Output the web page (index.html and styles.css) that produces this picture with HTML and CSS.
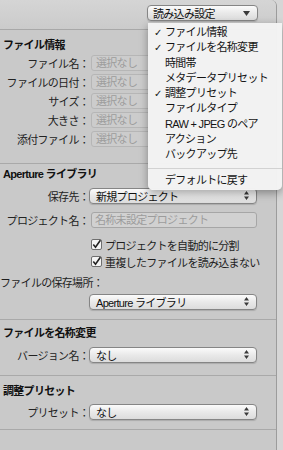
FILE: index.html
```html
<!DOCTYPE html>
<html lang="ja">
<head>
    <meta charset="UTF-8">
    <meta name="viewport" content="width=device-width, initial-scale=1.0">
    <title>読み込み設定</title>
    <link rel="stylesheet" href="styles.css">
</head>
<body>
    <div class="window">
        <div class="topbar">
            <div class="popup popup-top">
                <span>読み込み設定</span>
                <svg class="arrow-down" width="7" height="5" viewBox="0 0 7 5"><path d="M0 0H7L3.5 5Z" fill="#3a3a3a"/></svg>
            </div>
        </div>

        <div class="section section-file">
            <div class="heading">ファイル情報</div>
            <div class="row row-first"><div class="label">ファイル名：</div><div class="field">選択なし</div></div>
            <div class="row"><div class="label">ファイルの日付：</div><div class="field">選択なし</div></div>
            <div class="row"><div class="label">サイズ：</div><div class="field">選択なし</div></div>
            <div class="row"><div class="label">大きさ：</div><div class="field">選択なし</div></div>
            <div class="row"><div class="label">添付ファイル：</div><div class="field">選択なし</div></div>
        </div>

        <div class="section section-library">
            <div class="heading">Aperture ライブラリ</div>
            <div class="row row-first">
                <div class="label">保存先：</div>
                <div class="popup select"><span>新規プロジェクト</span><svg class="updown" width="5" height="9" viewBox="0 0 5 9"><path d="M0 3.5H5L2.5 0Z M0 5.5H5L2.5 9Z" fill="#3a3a3a"/></svg></div>
            </div>
            <div class="row row-project">
                <div class="label">プロジェクト名：</div>
                <div class="field field-light">名称未設定プロジェクト</div>
            </div>
            <div class="checks">
                <div class="check-row"><svg class="checkbox" width="11" height="11" viewBox="0 0 11 11"><rect x="0.5" y="0.5" width="10" height="10" rx="1.5" fill="#f4f4f4" stroke="#6f6f6f"/><path d="M2.3 5.6L4.5 8.2L9.4 1.2" fill="none" stroke="#222" stroke-width="1.6"/></svg><span>プロジェクトを自動的に分割</span></div>
                <div class="check-row"><svg class="checkbox" width="11" height="11" viewBox="0 0 11 11"><rect x="0.5" y="0.5" width="10" height="10" rx="1.5" fill="#f4f4f4" stroke="#6f6f6f"/><path d="M2.3 5.6L4.5 8.2L9.4 1.2" fill="none" stroke="#222" stroke-width="1.6"/></svg><span>重複したファイルを読み込まない</span></div>
            </div>
            <div class="line-label">ファイルの保存場所：</div>
            <div class="row row-location">
                <div class="label"></div>
                <div class="popup select"><span>Aperture ライブラリ</span><svg class="updown" width="5" height="9" viewBox="0 0 5 9"><path d="M0 3.5H5L2.5 0Z M0 5.5H5L2.5 9Z" fill="#3a3a3a"/></svg></div>
            </div>
        </div>

        <div class="section section-rename">
            <div class="heading">ファイルを名称変更</div>
            <div class="row row-first">
                <div class="label">バージョン名：</div>
                <div class="popup select"><span>なし</span><svg class="updown" width="5" height="9" viewBox="0 0 5 9"><path d="M0 3.5H5L2.5 0Z M0 5.5H5L2.5 9Z" fill="#3a3a3a"/></svg></div>
            </div>
        </div>

        <div class="section section-adjust">
            <div class="heading">調整プリセット</div>
            <div class="row row-first">
                <div class="label">プリセット：</div>
                <div class="popup select"><span>なし</span><svg class="updown" width="5" height="9" viewBox="0 0 5 9"><path d="M0 3.5H5L2.5 0Z M0 5.5H5L2.5 9Z" fill="#3a3a3a"/></svg></div>
            </div>
        </div>
    </div>

    <div class="menu">
        <div class="menu-item checked">ファイル情報</div>
        <div class="menu-item checked">ファイルを名称変更</div>
        <div class="menu-item">時間帯</div>
        <div class="menu-item">メタデータプリセット</div>
        <div class="menu-item checked">調整プリセット</div>
        <div class="menu-item">ファイルタイプ</div>
        <div class="menu-item">RAW + JPEG のペア</div>
        <div class="menu-item">アクション</div>
        <div class="menu-item">バックアップ先</div>
        <div class="menu-separator"></div>
        <div class="menu-item">デフォルトに戻す</div>
    </div>
</body>
</html>
```

FILE: styles.css
```css
body {
    margin: 0;
    background-color: #d6d6d6;
    font-family: "Liberation Sans", "Noto Sans CJK JP", sans-serif;
    font-size: 11px;
    letter-spacing: -0.7px;
    color: #1e1e1e;
}
.window {
    width: 276px;
    height: 450px;
    background-color: #c9c9c9;
    border-right: 1px solid #9c9c9c;
    border-top-right-radius: 6px;
    overflow: hidden;
}
.topbar {
    height: 30px;
    box-sizing: border-box;
    padding: 5px 18px 0 0;
    display: flex;
    justify-content: flex-end;
    align-items: flex-start;
    background: linear-gradient(#d5d5d5, #cbcbcb);
    border-bottom: 1px solid #a8a8a8;
}
.popup {
    height: 16px;
    box-sizing: border-box;
    display: flex;
    align-items: center;
    justify-content: space-between;
    padding: 0 7px 0 5px;
    border: 1px solid #858585;
    border-radius: 4px;
    background: linear-gradient(#fbfbfb, #e9e9e9 50%, #dcdcdc);
    box-shadow: 0 1px 1px rgba(0, 0, 0, 0.15);
    color: #111;
    white-space: nowrap;
}
.popup-top {
    width: 111px;
}
.select {
    width: 168px;
    padding-left: 6px;
}
.section {
    border-bottom: 1px solid #a9a9a9;
}
.heading {
    line-height: 14px;
    padding-left: 3px;
    font-weight: bold;
    color: #111;
    white-space: nowrap;
}
.row {
    display: flex;
    align-items: center;
    height: 19px;
}
.label {
    width: 89px;
    flex: none;
    display: flex;
    justify-content: flex-end;
    white-space: nowrap;
    color: #222;
}
.field {
    margin-left: 2px;
    width: 166px;
    height: 16px;
    box-sizing: border-box;
    padding-left: 4px;
    line-height: 14px;
    border: 1px solid #b6b6b6;
    border-radius: 3px;
    background-color: #cccccc;
    color: #9c9c9c;
    white-space: nowrap;
}
.field-light {
    border-color: #a6a6a6;
    background-color: #d1d1d1;
    padding-left: 3px;
}
.checks {
    margin-top: 7px;
    padding-left: 91px;
}
.check-row {
    height: 17px;
    display: flex;
    align-items: center;
    gap: 3px;
    white-space: nowrap;
}
.checkbox {
    flex: none;
}
.line-label {
    margin-top: 6px;
    line-height: 14px;
    white-space: nowrap;
}

/* section spacing */
.section-file {
    padding: 8px 0 15px;
}
.section-file .row-first {
    margin-top: 1px;
}
.section-library {
    padding: 3px 0 8px;
}
.section-library .row-first {
    margin-top: 5px;
}
.row-project {
    margin-top: 5px;
}
.row-location {
    margin-top: 2px;
}
.section-rename {
    padding: 6px 0 11px;
}
.section-rename .row-first {
    margin-top: 5px;
}
.section-adjust {
    padding: 8px 0 8px;
}
.section-adjust .row-first {
    margin-top: 4px;
}

/* dropdown menu */
.menu {
    position: absolute;
    left: 148px;
    top: 23px;
    width: 134px;
    padding: 2px 0 2px;
    background-color: rgba(243, 243, 243, 0.98);
    border-radius: 0 0 5px 5px;
    box-shadow: 0 3px 9px rgba(0, 0, 0, 0.35);
}
.menu-item {
    position: relative;
    line-height: 15.3px;
    padding-left: 17px;
    white-space: nowrap;
    color: #141414;
}
.menu-item.checked::before {
    content: "✓";
    position: absolute;
    left: 6px;
    font-family: "DejaVu Sans", sans-serif;
    font-weight: bold;
    font-size: 10px;
}
.menu-separator {
    height: 1px;
    margin: 5px 0 4px;
    background-color: #d2d2d2;
}
```
